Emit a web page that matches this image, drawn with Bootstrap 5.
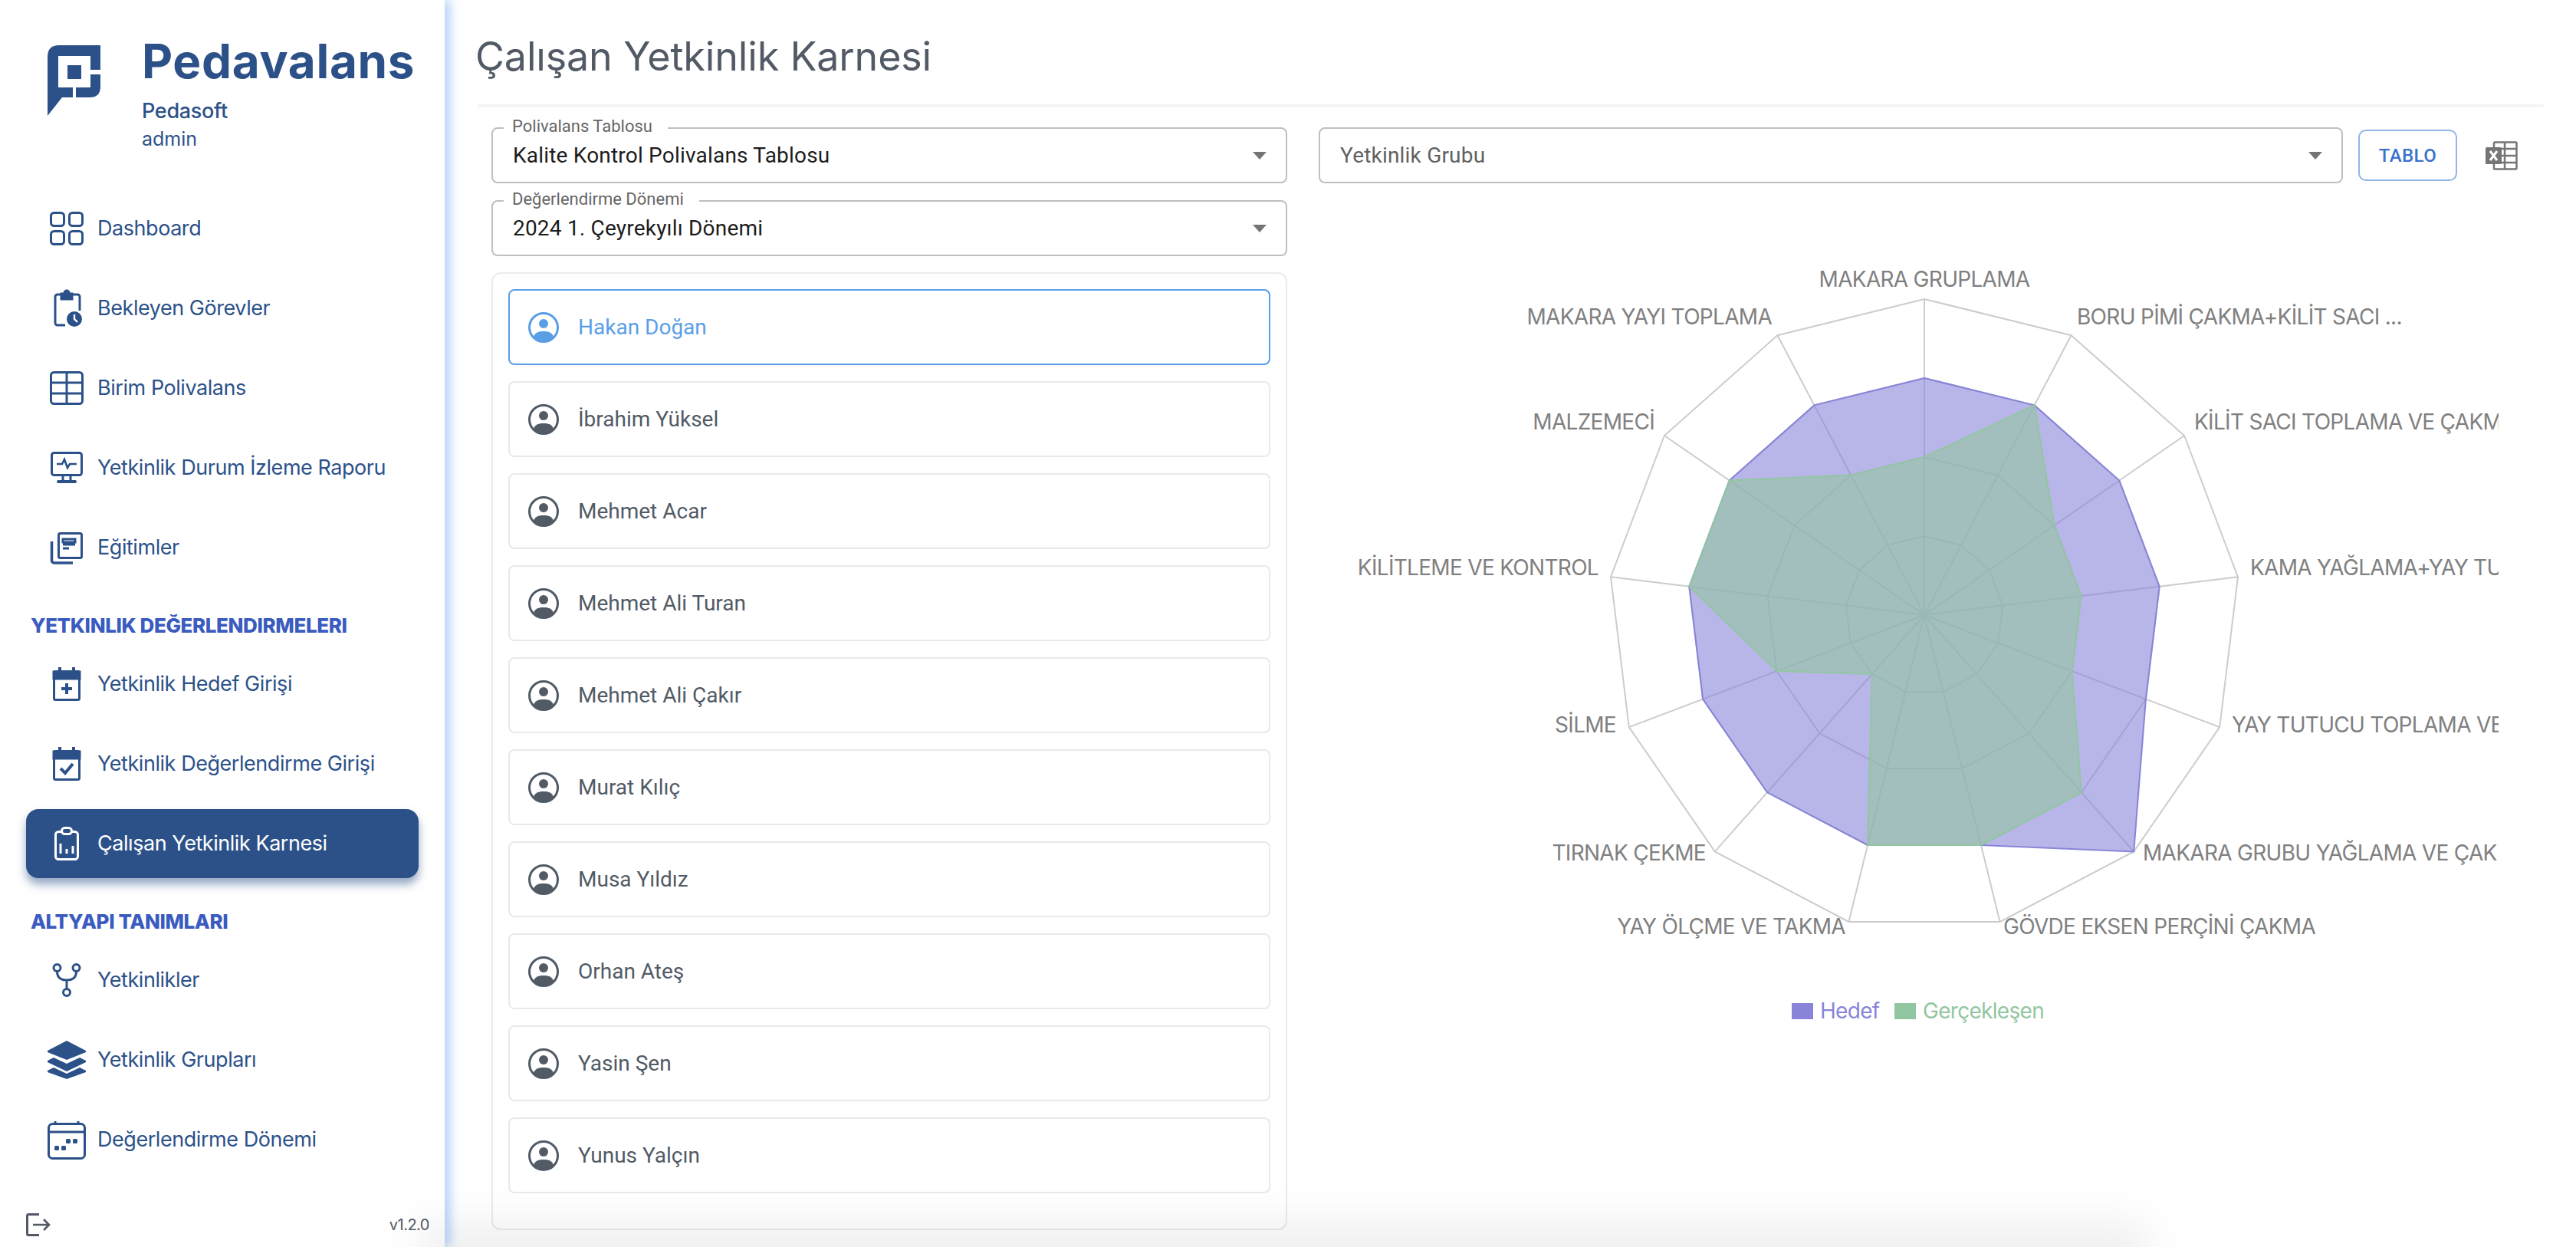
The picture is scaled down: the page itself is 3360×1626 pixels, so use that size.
<!DOCTYPE html>
<html lang="tr">
<head>
  <meta charset="UTF-8">
  <meta name="viewport" content="width=device-width, initial-scale=1.0">
  <title>Çalışan Yetkinlik Karnesi - Pedavalans</title>
  <link href="https://cdn.jsdelivr.net/npm/bootstrap@5.3.0/dist/css/bootstrap.min.css" rel="stylesheet">
  <style>
    html, body { height: 100%; }
    body {
      font-family: Roboto, "Liberation Sans", sans-serif;
      background: #fff;
      overflow: hidden;
    }
    .page-shell { height: 1626px; position: relative; overflow: hidden; }
    /* soft shadow of something sitting under the fold */
    .page-shell::after {
      content: "";
      position: absolute;
      left: 580px; right: 590px; bottom: -20px;
      height: 20px;
      box-shadow: 0 0 60px 30px rgba(0,0,0,.07);
      z-index: 3;
      pointer-events: none;
    }

    /* sidebar */
    .side-bar {
      width: 580px;
      flex: 0 0 580px;
      background: #fff;
      box-shadow: 8px 0 12px rgba(90, 160, 240, .42);
      padding: 59px 34px 0;
      font-family: Inter, "Open Sans", sans-serif;
      color: #2c5189;
      position: relative;
      z-index: 2;
    }
    .brand-row { height: 194px; padding-left: 28px; gap: 53px; }
    .brand-title { font-size: 62px; font-weight: 700; line-height: 50px; letter-spacing: .7px; margin: -4px 0 23px; }
    .brand-sub { font-size: 27px; font-weight: 500; line-height: 34px; letter-spacing: -.3px; }
    .brand-user { font-size: 25px; line-height: 38px; }
    .side-nav { gap: 14px; }
    .side-nav .nav-link {
      height: 90px;
      padding: 0 0 0 27px;
      gap: 14px;
      font-size: 27px;
      letter-spacing: -.45px;
      color: #2c5189;
      border-radius: 16px;
    }
    .side-nav .nav-link.active {
      background: #2c5189;
      color: #fff;
      box-shadow: 0 8px 12px rgba(44, 81, 137, .5);
    }
    .side-icon { width: 52px; height: 52px; flex: none; }
    .side-head {
      height: 60px;
      padding: 26px 0 0 6px;
      font-size: 26px;
      font-weight: 800;
      line-height: 34px;
      letter-spacing: -.4px;
      color: #3a5bbf;
    }
    .side-foot {
      position: absolute;
      left: 34px; right: 20px; bottom: 14px;
      color: #515a65;
      font-size: 20px;
      letter-spacing: -.5px;
    }

    /* main */
    .main-area { padding: 0 42px 0 41px; min-width: 0; }
    .page-head {
      height: 139px;
      margin-left: 2px;
      border-bottom: 3px solid #f4f4f4;
      box-shadow: 0 2px 3px rgba(0,0,0,.02);
    }
    .page-head h1 {
      font-family: Inter, "Open Sans", sans-serif;
      font-size: 52px;
      font-weight: 400;
      letter-spacing: -.15px;
      line-height: 60px;
      margin: 0 0 0 -3px;
      padding-top: 44px;
      color: #515a65;
    }
    .content-row { padding-left: 20px; }
    .left-col { width: 1038px; flex: none; margin-top: 27px; }
    .right-col { margin-left: 41px; margin-top: 27px; min-width: 0; }
    .pick-field { position: relative; }
    .pick-gap { margin-bottom: 22px; }
    .pick-field label {
      position: absolute;
      left: 16px; top: -15px;
      padding: 0 20px 0 11px;
      background: #fff;
      color: #666;
      font-size: 22px;
      line-height: 28px;
    }
    .form-select.pick-select {
      height: 73px;
      padding: 0 60px 0 26px;
      border: 2px solid #bfbfbf;
      border-radius: 8px;
      font-size: 28px;
      letter-spacing: .2px;
      color: #1c1c1c;
      background-image: url("data:image/svg+xml,%3Csvg xmlns='http://www.w3.org/2000/svg' width='18' height='10'%3E%3Cpath d='M0 0h18L9 10z' fill='%23757575'/%3E%3C/svg%3E");
      background-size: 18px 10px;
      background-position: right 25px center;
    }
    .form-select.pick-select.is-empty { color: #616161; }
    .people-card {
      margin-top: 21px;
      height: 1249px;
      border: 2px solid #ebebeb;
      border-radius: 12px;
      padding: 20px 20px 0;
    }
    .people-list { gap: 21px; }
    .people-list .list-group-item {
      height: 99px;
      padding: 0 0 0 24px;
      gap: 25px;
      border: 2px solid #e9e9e9;
      border-radius: 8px;
      color: #515a65;
      font-size: 28px;
      background: #fff;
    }
    .people-list .list-group-item.active {
      border-color: #5a9fe6;
      color: #5a9fe6;
      margin-top: 0;
    }
    .person-icon { width: 40px; height: 40px; flex: none; }
    .btn.tablo-btn {
      width: 129px;
      height: 67px;
      flex: none;
      margin-left: 20px;
      padding: 0;
      border: 2px solid #90b4e6;
      border-radius: 10px;
      color: #3a72cc;
      font-size: 24px;
      font-weight: 500;
      letter-spacing: .4px;
    }
    .excel-icon { width: 42px; height: 38px; flex: none; margin: 0 34px 0 37px; }
    .radar-box { margin: 61px 0 0 41px; width: 1498px; height: 1060px; overflow: hidden; }
    .radar-box svg { display: block; }
    .radar-box text {
      font-family: Inter, "Open Sans", sans-serif;
      font-size: 28px;
      letter-spacing: -.7px;
      fill: #808080;
      dominant-baseline: central;
    }
    .radar-box text.legend-a { fill: #8884d8; }
    .radar-box text.legend-b { fill: #92c6a1; }
  </style>
</head>
<body>
  <div class="page-shell d-flex">
    <!-- Sidebar -->
    <aside class="side-bar d-flex flex-column">
      <div class="brand-row d-flex align-items-start">
        <svg width="70" height="93" viewBox="62 59 70 93" fill="#2c5189">
          <path d="M62 74q0-15 15-15h54v32h-13V73H76v41h19v13H81l-19 24z"/>
          <path d="M118 97h13v16q0 14-14 14H99v-13h19z"/>
          <rect x="88" y="85" width="18" height="18"/>
        </svg>
        <div>
          <div class="brand-title">Pedavalans</div>
          <div class="brand-sub">Pedasoft</div>
          <div class="brand-user">admin</div>
        </div>
      </div>
      <nav class="nav flex-column side-nav">
        <a class="nav-link d-flex align-items-center" href="#">
          <svg class="side-icon" viewBox="0 0 52 52" fill="none" stroke="currentColor" stroke-width="3"><rect x="5.5" y="5.5" width="17" height="17" rx="4"/><rect x="29.5" y="5.5" width="17" height="17" rx="4"/><rect x="5.5" y="29.5" width="17" height="17" rx="4"/><rect x="29.5" y="29.5" width="17" height="17" rx="4"/></svg>
          Dashboard
        </a>
        <a class="nav-link d-flex align-items-center" href="#">
          <svg class="side-icon" viewBox="0 0 52 52" fill="none" stroke="currentColor" stroke-width="3"><path d="M24 48H14a3 3 0 0 1-3-3V11a3 3 0 0 1 3-3h26a3 3 0 0 1 3 3v18"/><path d="M19 7h14v7H19z" fill="currentColor"/><circle cx="26" cy="6" r="3" fill="currentColor"/><circle cx="36" cy="40" r="10" fill="currentColor" stroke="none"/><path d="M36 34v6l4 4" stroke="#fff" stroke-width="2.4"/></svg>
          Bekleyen Görevler
        </a>
        <a class="nav-link d-flex align-items-center" href="#">
          <svg class="side-icon" viewBox="0 0 52 52" fill="none" stroke="currentColor" stroke-width="3"><rect x="5.5" y="5.5" width="41" height="41" rx="4"/><path d="M26 5.5v41M5.5 19h41M5.5 33h41"/></svg>
          Birim Polivalans
        </a>
        <a class="nav-link d-flex align-items-center" href="#">
          <svg class="side-icon" viewBox="0 0 52 52" fill="none" stroke="currentColor" stroke-width="3"><rect x="6.5" y="6.5" width="39" height="29" rx="3"/><path d="M13 21h7l3-6 4 11 3-5h9" stroke-width="2.6"/><path d="M21 36v6M31 36v6"/><path d="M15 44h22" stroke-width="4" stroke-linecap="round"/></svg>
          Yetkinlik Durum İzleme Raporu
        </a>
        <a class="nav-link d-flex align-items-center" href="#">
          <svg class="side-icon" viewBox="0 0 52 52" fill="none" stroke="currentColor" stroke-width="3"><rect x="15.5" y="7.5" width="30" height="32" rx="2"/><path d="M6.500 18v25a3 3 0 0 0 3 3H34" stroke-width="3.500"/><path d="M21 15h16v4H21zM21 22h16M21 27h8" stroke-width="3"/></svg>
          Eğitimler
        </a>
        <div class="side-head">YETKINLIK DEĞERLENDIRMELERI</div>
        <a class="nav-link d-flex align-items-center" href="#">
          <svg class="side-icon" viewBox="0 0 52 52" fill="none" stroke="currentColor" stroke-width="3"><rect x="9.500" y="9.500" width="33" height="37" rx="2"/><path d="M9 10h34v9H9z" fill="currentColor"/><path d="M17 4v6M35 4v6" stroke-width="4"/><path d="M26 25v14M19 32h14" stroke-width="4"/></svg>
          Yetkinlik Hedef Girişi
        </a>
        <a class="nav-link d-flex align-items-center" href="#">
          <svg class="side-icon" viewBox="0 0 52 52" fill="none" stroke="currentColor" stroke-width="3"><rect x="9.500" y="9.500" width="33" height="37" rx="2"/><path d="M9 10h34v9H9z" fill="currentColor"/><path d="M17 4v6M35 4v6" stroke-width="4"/><path d="M18 32l6 6 10-12" stroke-width="4"/></svg>
          Yetkinlik Değerlendirme Girişi
        </a>
        <a class="nav-link active d-flex align-items-center" href="#">
          <svg class="side-icon" viewBox="0 0 52 52" fill="none" stroke="currentColor" stroke-width="3"><rect x="11.500" y="10.500" width="29" height="36" rx="4"/><rect x="19.500" y="5.500" width="13" height="8" rx="4" fill="#2c5189"/><path d="M18 26v13M26 33v6M34 29v10" stroke-width="3"/></svg>
          Çalışan Yetkinlik Karnesi
        </a>
        <div class="side-head">ALTYAPI TANIMLARI</div>
        <a class="nav-link d-flex align-items-center" href="#">
          <svg class="side-icon" viewBox="0 0 52 52" fill="none" stroke="currentColor" stroke-width="3"><circle cx="13.500" cy="10" r="4.500"/><circle cx="38.500" cy="10" r="4.500"/><circle cx="26" cy="42" r="4.500"/><path d="M13.500 15c0 8 5 11 12.500 11s12.500-3 12.500-11M26 26v11"/></svg>
          Yetkinlikler
        </a>
        <a class="nav-link d-flex align-items-center" href="#">
          <svg class="side-icon" viewBox="0 0 52 52" fill="currentColor"><path d="M26 1l25 13v2L26 26 1 16v-2z"/><path d="M9 23l17 8 17-8 8 4v2L26 41 1 29v-2z"/><path d="M9 36l17 8 17-8 8 4v2L26 51 1 42v-2z"/></svg>
          Yetkinlik Grupları
        </a>
        <a class="nav-link d-flex align-items-center" href="#">
          <svg class="side-icon" viewBox="0 0 52 52" fill="none" stroke="currentColor" stroke-width="3"><rect x="2.500" y="5.500" width="47" height="45" rx="5"/><path d="M2.500 16h47M11 2v4M41 2v4"/><g fill="currentColor" stroke="none"><rect x="10" y="34" width="6" height="6" rx="1.500"/><rect x="19" y="34" width="6" height="6" rx="1.500"/><rect x="25" y="25" width="6" height="6" rx="1.500"/><rect x="34" y="25" width="6" height="6" rx="1.500"/></g></svg>
          Değerlendirme Dönemi
        </a>
      </nav>
      <div class="side-foot d-flex justify-content-between align-items-center">
        <svg width="32" height="30" viewBox="0 0 32 30" fill="none" stroke="currentColor" stroke-width="3"><path d="M17 1.500H3a1.500 1.500 0 0 0-1.500 1.500v24a1.500 1.500 0 0 0 1.500 1.500h14"/><path d="M9 15h21M23 8l7 7-7 7" stroke-width="2.600"/></svg>
        <span>v1.2.0</span>
      </div>
    </aside>

    <!-- Content -->
    <main class="main-area flex-grow-1">
      <header class="page-head"><h1>Çalışan Yetkinlik Karnesi</h1></header>
      <div class="d-flex content-row">
        <div class="left-col">
          <div class="pick-field pick-gap">
            <label>Polivalans Tablosu</label>
            <select class="form-select pick-select"><option>Kalite Kontrol Polivalans Tablosu</option></select>
          </div>
          <div class="pick-field">
            <label>Değerlendirme Dönemi</label>
            <select class="form-select pick-select"><option>2024 1. Çeyrekyılı Dönemi</option></select>
          </div>
          <div class="card people-card">
            <div class="list-group people-list" id="peopleList"></div>
          </div>
        </div>
        <div class="right-col flex-grow-1">
          <div class="d-flex align-items-center">
            <select class="form-select pick-select is-empty flex-grow-1"><option>Yetkinlik Grubu</option></select>
            <button type="button" class="btn btn-outline-primary tablo-btn">TABLO</button>
            <svg class="excel-icon" viewBox="0 0 42 38" fill="none" stroke="#757575" stroke-width="2.500"><rect x="11" y="1.500" width="29.500" height="35" rx="1"/><path d="M25 1.500v35M11 10h29.500M11 19h29.500M11 28h29.500"/><rect x="0" y="8" width="21" height="22" rx="1.500" fill="#757575" stroke="none"/><path d="M6 13l9 12M15 13l-9 12" stroke="#fff" stroke-width="3"/></svg>
          </div>
          <div class="radar-box">
            <svg id="radar" width="1498" height="1060" viewBox="0 0 1498 1060">
              <g id="radarGrid" fill="none" stroke="#ccc" stroke-width="2"></g>
              <polygon id="radarHedef" fill="#8884d8" fill-opacity=".6" stroke="#8884d8" stroke-width="2"/>
              <polygon id="radarGercek" fill="#92c6a1" fill-opacity=".6" stroke="#92c6a1" stroke-width="2"/>
              <g>
                <text x="749" y="64" text-anchor="middle">MAKARA GRUPLAMA</text>
                <text x="948" y="113">BORU PİMİ ÇAKMA+KİLİT SACI ...</text>
                <text x="1101" y="250">KİLİT SACI TOPLAMA VE ÇAKMA</text>
                <text x="1174" y="440">KAMA YAĞLAMA+YAY TUTUCU TOPLAMA</text>
                <text x="1150" y="645">YAY TUTUCU TOPLAMA VE ÇAKMA</text>
                <text x="1034" y="812">MAKARA GRUBU YAĞLAMA VE ÇAKMA</text>
                <text x="852" y="908">GÖVDE EKSEN PERÇİNİ ÇAKMA</text>
                <text x="646" y="908" text-anchor="end">YAY ÖLÇME VE TAKMA</text>
                <text x="464" y="812" text-anchor="end">TIRNAK ÇEKME</text>
                <text x="347" y="645" text-anchor="end">SİLME</text>
                <text x="324" y="440" text-anchor="end">KİLİTLEME VE KONTROL</text>
                <text x="397" y="250" text-anchor="end">MALZEMECİ</text>
                <text x="550" y="113" text-anchor="end">MAKARA YAYI TOPLAMA</text>
              </g>
              <rect x="576" y="1008" width="28" height="21" fill="#8884d8"/>
              <text class="legend-a" x="613" y="1018">Hedef</text>
              <rect x="710" y="1008" width="28" height="21" fill="#92c6a1"/>
              <text class="legend-b" x="747" y="1018">Gerçekleşen</text>
            </svg>
          </div>
        </div>
      </div>
    </main>
  </div>

  <script src="https://cdn.jsdelivr.net/npm/bootstrap@5.3.0/dist/js/bootstrap.bundle.min.js"></script>
  <script>
    // people list
    const people = ['Hakan Doğan', 'İbrahim Yüksel', 'Mehmet Acar', 'Mehmet Ali Turan', 'Mehmet Ali Çakır',
      'Murat Kılıç', 'Musa Yıldız', 'Orhan Ateş', 'Yasin Şen', 'Yunus Yalçın'];
    const personSvg = '<svg class="person-icon" viewBox="0 0 40 40"><circle cx="20" cy="20" r="18.500" fill="none" stroke="currentColor" stroke-width="3"/><circle cx="20" cy="15" r="6" fill="currentColor"/><path d="M7 32.500C9 26 14 25 20 25s11 1 13 7.500C30 37 25 39 20 39S10 37 7 32.500z" fill="currentColor"/></svg>';
    document.getElementById('peopleList').innerHTML = people.map(function (name, i) {
      return '<a href="#" class="list-group-item d-flex align-items-center' + (i === 0 ? ' active' : '') + '">' + personSvg + name + '</a>';
    }).join('');

    // radar chart, 13 axes, 4 rings
    const cx = 749, cy = 502, unit = 103, axes = 13;
    const hedef = [3, 3, 3, 3, 3, 4, 3, 3, 3, 3, 3, 3, 3];
    const gercek = [2, 3, 2, 2, 2, 3, 3, 3, 1, 2, 3, 3, 2];
    function pt(i, r) {
      const a = 2 * Math.PI * i / axes;
      return (cx + Math.sin(a) * r * unit).toFixed(1) + ',' + (cy - Math.cos(a) * r * unit).toFixed(1);
    }
    let grid = '';
    for (let r = 1; r <= 4; r++) {
      grid += '<polygon points="' + Array.from({ length: axes }, (_, i) => pt(i, r)).join(' ') + '"/>';
    }
    for (let i = 0; i < axes; i++) {
      grid += '<line x1="' + cx + '" y1="' + cy + '" x2="' + pt(i, 4).split(',')[0] + '" y2="' + pt(i, 4).split(',')[1] + '"/>';
    }
    document.getElementById('radarGrid').innerHTML = grid;
    document.getElementById('radarHedef').setAttribute('points', hedef.map((v, i) => pt(i, v)).join(' '));
    document.getElementById('radarGercek').setAttribute('points', gercek.map((v, i) => pt(i, v)).join(' '));
  </script>
</body>
</html>
